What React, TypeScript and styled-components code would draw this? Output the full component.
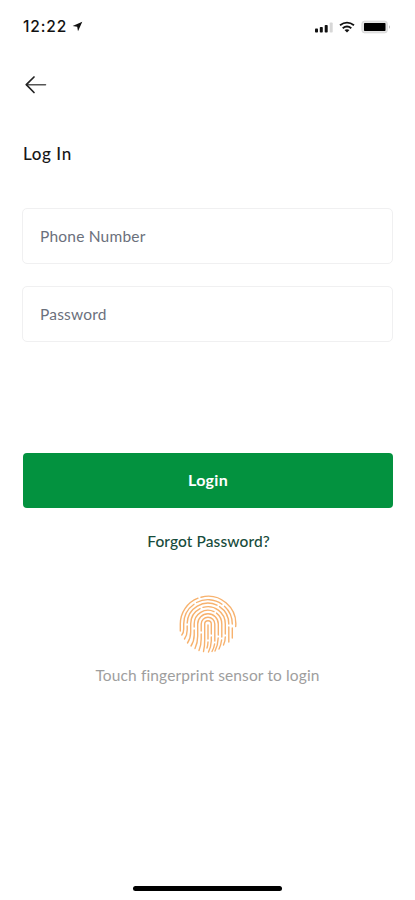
import React from "react";
import styled, { createGlobalStyle } from "styled-components";

const GlobalStyle = createGlobalStyle`
  *, *::before, *::after { box-sizing: border-box; }
  body { margin: 0; background: #fff; }
`;

const Screen = styled.div`
  display: flex;
  flex-direction: column;
  width: 415px;
  height: 900px;
  overflow: hidden;
  background: #fff;
  font-family: Lato, "Open Sans", sans-serif;
`;

const StatusBar = styled.header`
  display: flex;
  justify-content: space-between;
  align-items: center;
  height: 52px;
  padding: 1px 24px 0 23px;
`;

const StatusGroup = styled.div<{ $gap: number }>`
  display: flex;
  align-items: center;
  gap: ${(p) => p.$gap}px;
`;

const Time = styled.span`
  font: 500 15.5px/20px Inter, sans-serif;
  letter-spacing: 0.85px;
  color: #111;
`;

const BackButton = styled.button`
  display: flex;
  align-self: flex-start;
  margin: 23px 0 0 24px;
  padding: 0;
  border: 0;
  background: none;
`;

const Title = styled.h1`
  margin: 47px 0 0 23px;
  font-size: 17px;
  line-height: 24px;
  font-weight: 500;
  letter-spacing: 0.6px;
  color: #171717;
`;

const Form = styled.form`
  display: flex;
  flex-direction: column;
  margin: 42px 22px 0;
`;

const Field = styled.input`
  width: 100%;
  height: 56px;
  margin-bottom: 22px;
  padding: 0 17px;
  border: 1px solid #f0f0f1;
  border-radius: 5px;
  outline: 0;
  background: #fff;
  color: #6b707c;
  font: 400 15.5px/20px Lato, sans-serif;
  letter-spacing: 0.2px;
  &::placeholder { color: #6b707c; opacity: 1; }
`;

const LoginButton = styled.button`
  height: 55px;
  margin: 89px 0 0 1px;
  padding: 0 0 1px;
  border: 0;
  border-radius: 4px;
  background: #03923f;
  color: #fff;
  font: 700 16px/20px Lato, sans-serif;
  letter-spacing: 0.3px;
`;

const ForgotLink = styled.a`
  align-self: center;
  margin: 23px 0 0 2px;
  font-size: 15.5px;
  line-height: 20px;
  font-weight: 500;
  color: #174c3b;
  letter-spacing: 0.1px;
`;

const Biometric = styled.section`
  display: flex;
  flex-direction: column;
  align-items: center;
  margin-top: 44px;
`;

const Hint = styled.p`
  margin: 12px 0 0;
  font-size: 15.5px;
  line-height: 20px;
  letter-spacing: 0.13px;
  color: #9e9e9e;
`;

const HomeIndicator = styled.div`
  width: 149px;
  height: 5px;
  margin: auto 0 9px 133px;
  border-radius: 3px;
  background: #000;
`;

const ridges = [
  "M1.3 36V29A27.7 27.7 0 0 1 19 3.2M22 2.2A27.7 27.7 0 0 1 56.7 31.5",
  "M2.8 40Q4.7 38 4.7 34V29A24.3 24.3 0 0 1 15 9.2M17.5 7.5A24.3 24.3 0 0 1 43 9.2M45.5 11.3A24.3 24.3 0 0 1 53.3 29M53.3 33V43",
  "M5.5 44Q8.2 40 8.2 35V31M8.2 28A20.8 20.8 0 0 1 38 10.2M40.5 11.6A20.8 20.8 0 0 1 49.8 29M49.8 32V47",
  "M8.5 48Q11.7 43 11.7 37V29A17.3 17.3 0 0 1 21 13.6M24 12.4A17.3 17.3 0 0 1 46.3 29V39M46.3 42Q46.3 46 44.5 50",
  "M12 51Q15.2 46 15.2 40V35M15.2 32V29A13.8 13.8 0 0 1 35 16.6M37.5 18.1A13.8 13.8 0 0 1 42.8 29V42M42.6 45Q42 50 40 54",
  "M16 53.5Q18.7 48 18.7 41V29A10.3 10.3 0 0 1 39.3 29V40M39.2 43Q39 50 36 56",
  "M20 55.5Q22.2 50 22.2 44V39M22.2 36V29A6.8 6.8 0 0 1 35.8 29V46M35.6 49Q35 53 33 56.5",
  "M24.5 56.5Q25.7 52 25.7 45V29A3.3 3.3 0 0 1 32.3 29V39M32.3 42V46Q32 52 29.5 57",
  "M29 30V44M29 47Q28.8 51 28 53",
];

const Fingerprint = () => (
  <svg width="58" height="58" viewBox="0 0 58 58" fill="none" stroke="#f7b26e" strokeWidth="1.4" strokeLinecap="round">
    {ridges.map((d) => (
      <path key={d} d={d} />
    ))}
  </svg>
);

const LocationArrow = () => (
  <svg width="11" height="11" viewBox="0 0 11 11">
    <path d="M10.3.8.6 5.1 5.2 5.8 6 10.3Z" fill="#111" />
  </svg>
);

const Signal = () => (
  <svg width="18" height="12" viewBox="0 0 18 12" fill="#111">
    <rect x="0" y="7.5" width="3" height="4" rx=".8" />
    <rect x="4.8" y="6" width="3" height="5.5" rx=".8" />
    <rect x="9.7" y="4" width="3" height="7.5" rx=".8" />
    <rect x="14.7" y="1.5" width="3" height="10" rx=".8" fill="#d7d7d7" />
  </svg>
);

const Wifi = () => (
  <svg width="16" height="12" viewBox="0 0 16 12" fill="none" stroke="#111" strokeWidth="1.9">
    <path d="M1 4.3Q8-1 15 4.3M3.7 7.2Q8 3.9 12.3 7.2" />
    <path d="M5.5 9.1Q8 7.4 10.5 9.1L8 11.4Z" fill="#111" stroke="none" />
  </svg>
);

const Battery = () => (
  <svg width="30" height="14" viewBox="0 0 30 14">
    <rect x=".9" y="1.2" width="25.4" height="11.6" rx="2.5" fill="#e5e5e5" stroke="#d8d8d8" />
    <rect x="3" y="3" width="21.5" height="8" rx=".7" fill="#000" />
    <path d="M28 5q1.5 2 0 4Z" fill="#999" />
  </svg>
);

const BackArrow = () => (
  <svg width="24" height="20" viewBox="0 0 24 20" fill="none" strokeLinecap="round" strokeLinejoin="round">
    <path d="M2.5 9.7H21.5" stroke="#555" strokeWidth="1.5" />
    <path d="M10 2 2.3 9.7 10 17.5" stroke="#222" strokeWidth="1.7" />
  </svg>
);

export default function App() {
  return (
    <Screen>
      <GlobalStyle />
      <StatusBar>
        <StatusGroup $gap={5}>
          <Time>12:22</Time>
          <LocationArrow />
        </StatusGroup>
        <StatusGroup $gap={6}>
          <Signal />
          <Wifi />
          <Battery />
        </StatusGroup>
      </StatusBar>
      <BackButton aria-label="Back">
        <BackArrow />
      </BackButton>
      <Title>Log In</Title>
      <Form>
        <Field type="tel" placeholder="Phone Number" />
        <Field type="password" placeholder="Password" />
        <LoginButton type="button">Login</LoginButton>
        <ForgotLink>Forgot Password?</ForgotLink>
      </Form>
      <Biometric>
        <Fingerprint />
        <Hint>Touch fingerprint sensor to login</Hint>
      </Biometric>
      <HomeIndicator />
    </Screen>
  );
}
